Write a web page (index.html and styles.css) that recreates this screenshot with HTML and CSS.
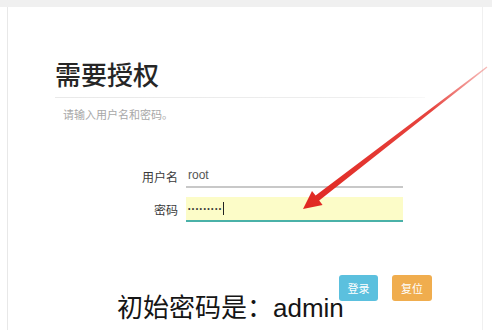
FILE: index.html
```html
<!DOCTYPE html>
<html lang="zh-CN">
<head>
    <meta charset="UTF-8">
    <meta name="viewport" content="width=device-width, initial-scale=1.0">
    <title>需要授权</title>
    <link rel="stylesheet" href="styles.css">
</head>
<body>

    <div class="topbar"></div>

    <div class="auth-dialog">

        <!-- Title and hint -->
        <div class="auth-head">
            <h1>需要授权</h1>
            <div class="auth-rule"></div>
            <p class="auth-hint">请输入用户名和密码。</p>
        </div>

        <!-- Login fields -->
        <div class="auth-form">
            <label class="auth-label">用户名</label>
            <div class="auth-field">root</div>

            <label class="auth-label">密码</label>
            <div class="auth-field auth-field-active"><span class="auth-dots">•••••••••</span><span class="auth-caret"></span></div>
        </div>

        <!-- Buttons -->
        <div class="auth-buttons">
            <button class="btn btn-info">登录</button>
            <button class="btn btn-warning">复位</button>
        </div>

        <!-- Annotation over the screenshot -->
        <div class="note">初始密码是：<span class="note-latin">admin</span></div>
    </div>

    <svg class="arrow" width="492" height="330" viewBox="0 0 492 330">
        <defs>
            <linearGradient id="arrow-fade" x1="487" y1="67" x2="303" y2="209" gradientUnits="userSpaceOnUse">
                <stop offset="0" stop-color="#e8453f" stop-opacity="0.35"/>
                <stop offset="0.3" stop-color="#e4302a" stop-opacity="0.9"/>
                <stop offset="1" stop-color="#e02822"/>
            </linearGradient>
        </defs>
        <polygon fill="url(#arrow-fade)"
                 points="487.4,67.5 319.2,200.5 322.6,205.0 303,209 312.0,191.0 315.6,195.6 486.6,66.5"/>
    </svg>

</body>
</html>
```

FILE: styles.css
```css
body {
    margin: 0;
    background: #fff;
    font-family: "Liberation Sans", "Noto Sans CJK SC", sans-serif;
    color: #333;
    width: 492px;
    height: 330px;
    overflow: hidden;
}

.topbar {
    height: 7px;
    background: #f0f0f0;
}

.auth-dialog {
    position: relative;
    margin: 0 9px 0 7px;
    height: 323px;
    border-left: 1px solid #e8e8e8;
    border-right: 1px solid #f0f0f0;
}

.auth-head {
    padding: 52px 0 0 47px;
}

.auth-head h1 {
    margin: 0;
    font-size: 26px;
    line-height: 30px;
    font-weight: 500;
    color: #262626;
    font-family: "Noto Sans CJK SC", sans-serif;
}

.auth-rule {
    margin-top: 8px;
    width: 370px;
    height: 1px;
    background: linear-gradient(90deg, #e9e9e9, #eeeeee 80%, #f8f8f8);
}

.auth-hint {
    margin: 9px 0 0 8px;
    font-size: 11px;
    line-height: 14px;
    color: #a8a8a8;
    font-family: "Noto Sans CJK SC", sans-serif;
}

.auth-form {
    display: grid;
    grid-template-columns: 170px 217px;
    column-gap: 8px;
    row-gap: 9px;
    margin-top: 43px;
    align-items: center;
}

.auth-label {
    text-align: right;
    font-size: 12px;
    color: #3a3a3a;
    font-family: "Noto Sans CJK SC", sans-serif;
}

.auth-field {
    height: 22px;
    padding-left: 2px;
    border-bottom: 2px solid #c8c8c8;
    font-size: 12px;
    line-height: 18px;
    color: #555;
    display: flex;
    align-items: center;
}

.auth-field-active {
    height: 23px;
    background: #fcfcc8;
    border-bottom-color: #4ab1a8;
}

.auth-dots {
    font-size: 7px;
    letter-spacing: 1.4px;
    color: #333;
}

.auth-caret {
    width: 1px;
    height: 13px;
    background: #222;
}

.auth-buttons {
    display: flex;
    gap: 14px;
    margin: 53px 0 0 331px;
}

.btn {
    height: 26px;
    width: 39px;
    padding: 0;
    border: none;
    border-radius: 3px;
    color: #fff;
    font-size: 11px;
    font-family: "Noto Sans CJK SC", sans-serif;
}

.btn-info {
    background: #5bc0de;
}

.btn-warning {
    width: 40px;
    background: #f0ad4e;
}

.note {
    position: absolute;
    left: 109px;
    top: 283px;
    font-size: 26px;
    line-height: 32px;
    color: #151515;
    font-family: "Noto Sans CJK SC", sans-serif;
}

.note-latin {
    font-size: 26px;
    font-family: "Liberation Sans", sans-serif;
}

.arrow {
    position: absolute;
    left: 0;
    top: 0;
    pointer-events: none;
}
```
